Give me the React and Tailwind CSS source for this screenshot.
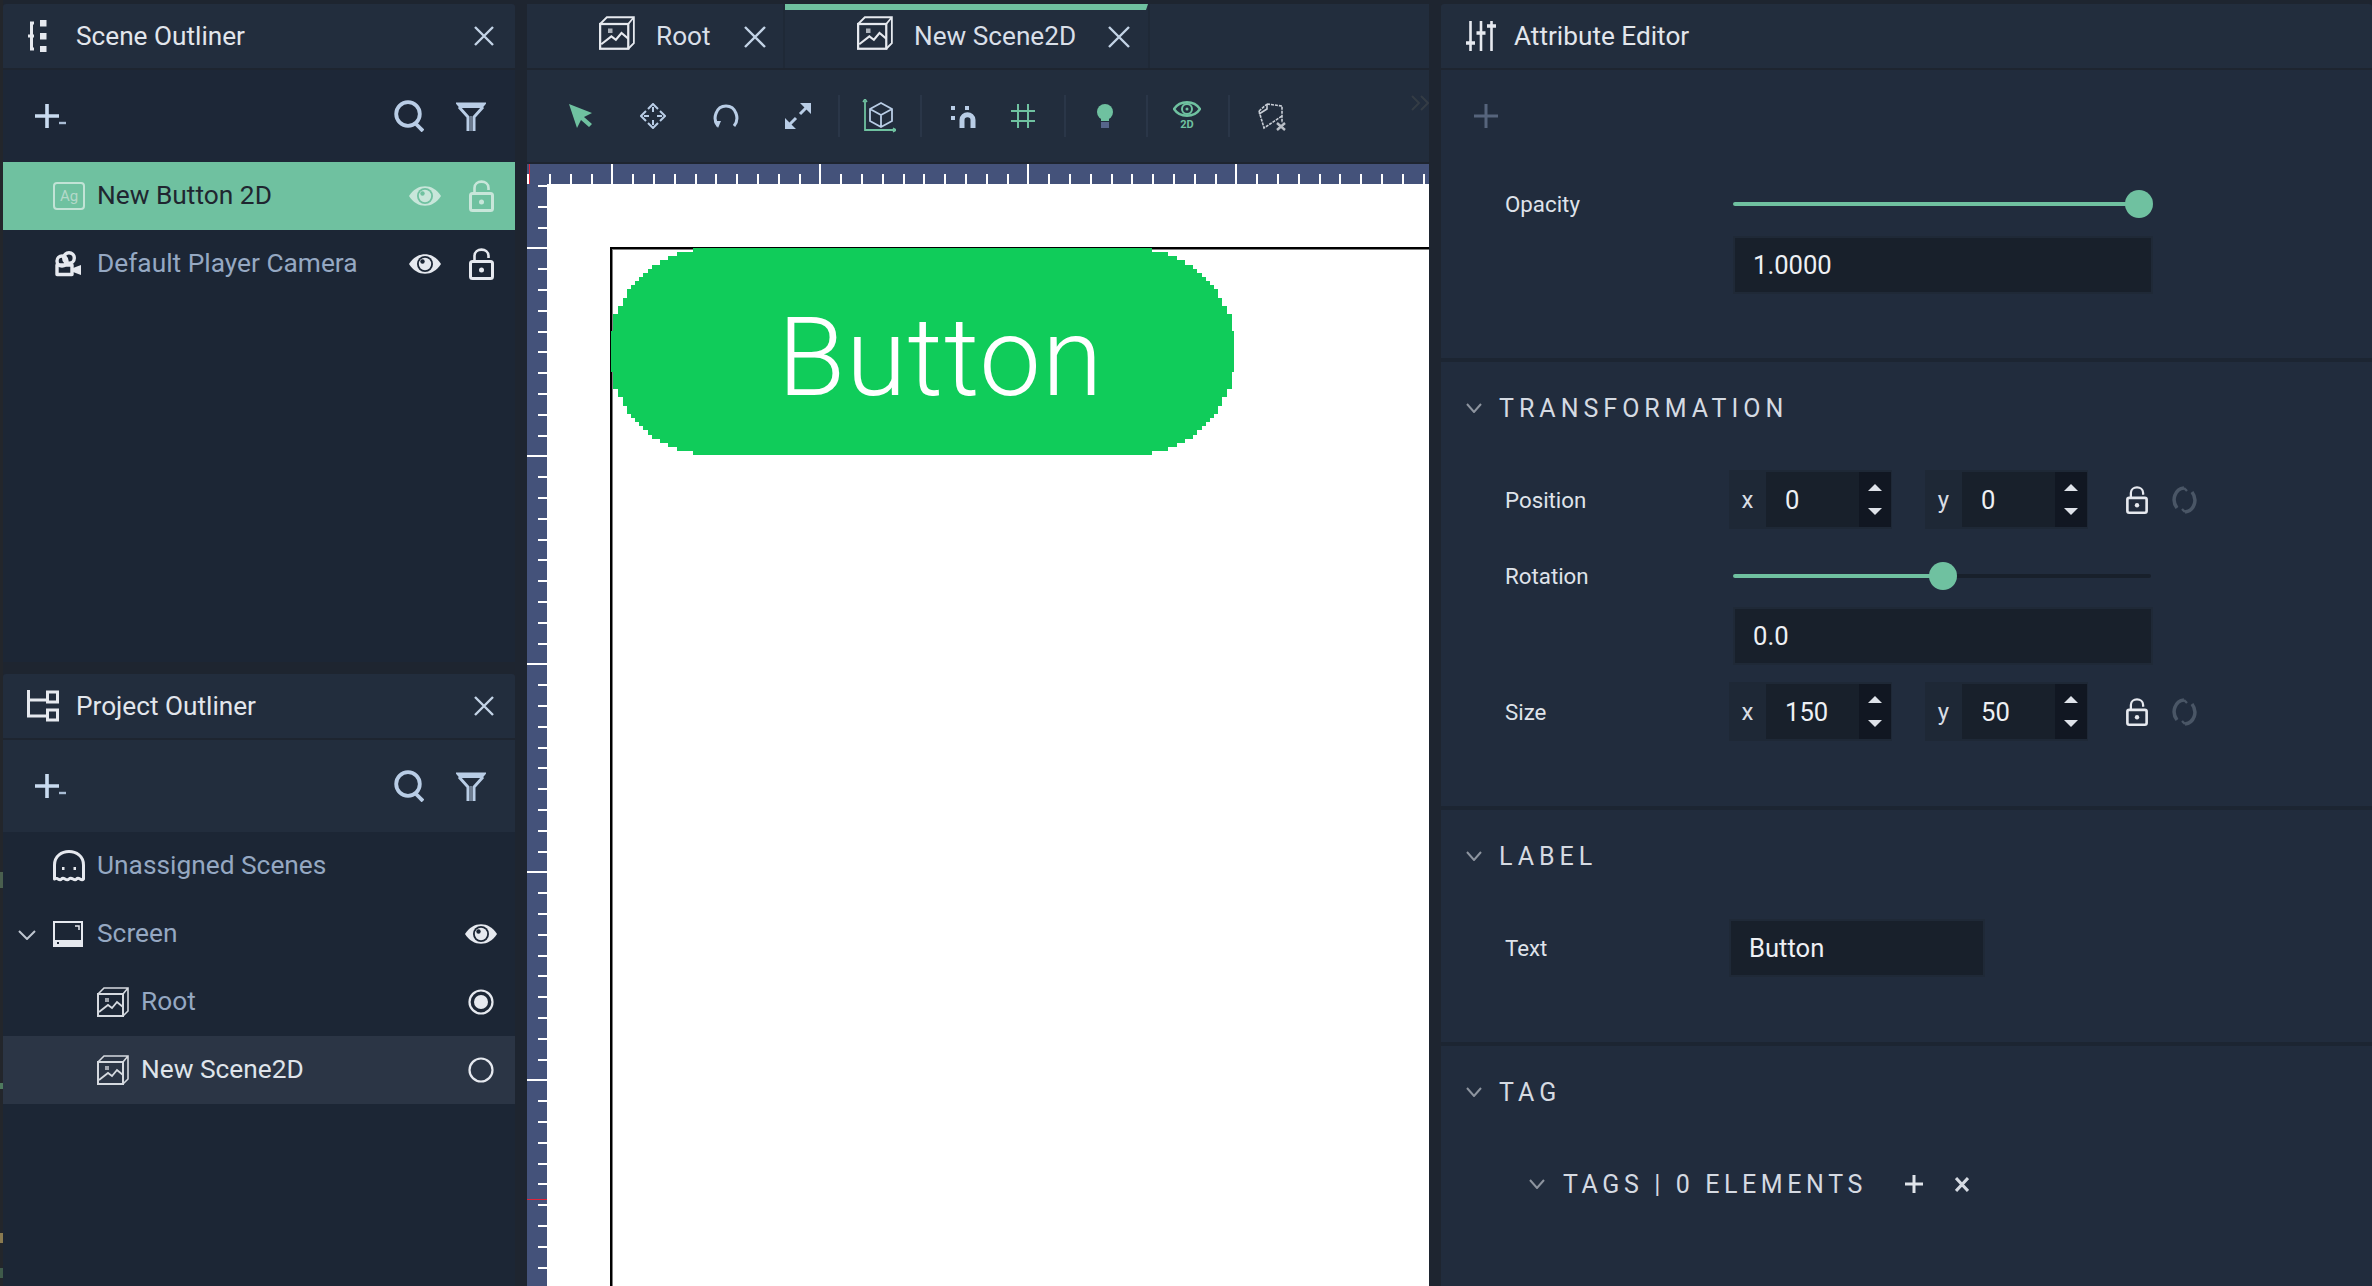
const L = '#1c2635', G = '#6fc1a0', I = '#b9cde6', W = '#e6e9ef';

const Svg = ({ w, h, children, className = '' }) => (
  <svg width={w} height={h} viewBox={`0 0 ${w} ${h}`} fill="none" className={`shrink-0 ${className}`}>{children}</svg>
);

const Close = ({ s = 20, c = '#c3d3e6' }) => (
  <Svg w={s} h={s}><path d={`M1 1L${s - 1} ${s - 1}M${s - 1} 1L1 ${s - 1}`} stroke={c} strokeWidth="2.4" /></Svg>
);
const TreeIcon = () => (
  <Svg w={20} h={32}>
    <path d="M7 3H4.500V29H7M1 16H7" stroke={W} strokeWidth="3" />
    <rect x="13" y="0" width="6.500" height="6.500" fill={W} /><rect x="13" y="13" width="6.500" height="6.500" fill={W} /><rect x="13" y="26" width="6.500" height="6.500" fill={W} />
  </Svg>
);
const ProjectIcon = () => (
  <Svg w={32} h={32}>
    <path d="M1.500 0V26H20M1.500 10H20" stroke={W} strokeWidth="3" />
    <rect x="20.500" y="2" width="10" height="10" stroke={W} strokeWidth="3" /><rect x="20.500" y="20" width="10" height="10" stroke={W} strokeWidth="3" />
  </Svg>
);
const Sliders = () => (
  <Svg w={30} h={30}>
    <path d="M4.500 0V30M15 0V30M25.500 0V30" stroke={W} strokeWidth="2.600" />
    <path d="M0 22H9M10.500 12H19.500M21 5H30" stroke={W} strokeWidth="3.500" />
  </Svg>
);
const PlusMenu = () => (
  <Svg w={32} h={24}>
    <path d="M12 0V24M0 12H24" stroke="#c9dbf0" strokeWidth="3.600" /><path d="M24 19H31" stroke="#a9bcd4" strokeWidth="2.400" />
  </Svg>
);
const Search = () => (
  <Svg w={30} h={32}>
    <circle cx="14" cy="14" r="11.800" stroke={I} strokeWidth="3.800" /><path d="M21 23L29 31" stroke={I} strokeWidth="3.800" />
  </Svg>
);
const Filter = () => (
  <Svg w={30} h={30}>
    <path d="M1 2.500H29L26 6H4Z" fill={I} stroke={I} strokeWidth="1.800" />
    <path d="M3 6L12 16V30M27 6L18 16V30" stroke={I} strokeWidth="3" /><path d="M15 15V30" stroke={I} strokeWidth="2" strokeOpacity=".5" />
  </Svg>
);
const Eye = ({ c = W, bg = L }) => (
  <Svg w={32} h={20}>
    <path d="M0 10C8 -3 24 -3 32 10C24 23 8 23 0 10Z" fill={c} />
    <circle cx="16" cy="10" r="8" fill={bg} /><circle cx="16" cy="10" r="6.200" fill={c} /><circle cx="13.500" cy="7.500" r="2.200" fill={bg} />
  </Svg>
);
const Lock = ({ c = W, w = 25, h = 32 }) => (
  <svg width={w} height={h} viewBox="0 0 25 32" fill="none" className="shrink-0">
    <rect x="1.500" y="13.500" width="22" height="17" rx="2" stroke={c} strokeWidth="3" />
    <path d="M5.500 13V8C5.500 -0.500 19.500 -0.500 19.500 8V10" stroke={c} strokeWidth="2.600" />
    <circle cx="12.500" cy="22" r="2.500" fill={c} />
  </svg>
);
const Ag = () => (
  <div className="flex h-[28px] w-[32px] shrink-0 items-center justify-center rounded-[4px] border-2 border-[#c2e3d6] text-[15px] text-[#b4d9ca]">Ag</div>
);
const Camera = () => (
  <Svg w={29} h={26}>
    <circle cx="9" cy="10" r="5" stroke={W} strokeWidth="3.400" />
    <circle cx="16" cy="7" r="5.300" stroke={W} strokeWidth="3.400" />
    <path d="M4 14V23.500H19V14H4Z" stroke={W} strokeWidth="3.400" strokeLinejoin="round" />
    <path d="M20 17L28 14V24L20 21Z" fill={W} />
    <path d="M11 11H18V14H11Z" fill={W} />
  </Svg>
);
const Ghost = () => (
  <Svg w={32} h={32}>
    <path d="M1.500 29V15C1.500 -3 30.500 -3 30.500 15V29C28 32 26 26 23.500 29C21 32 19 26 16 29C13 32 11 26 8.500 29C6 32 4 26 1.500 29Z" stroke={W} strokeWidth="3" strokeLinejoin="round" />
    <rect x="9" y="17" width="2.500" height="3" fill={W} /><rect x="20.500" y="17" width="2.500" height="3" fill={W} />
  </Svg>
);
const Screen = () => (
  <Svg w={30} h={26}>
    <rect x="1" y="1" width="28" height="24" stroke={W} strokeWidth="2" /><rect x="0" y="19" width="30" height="7" fill={W} />
    <rect x="4" y="21" width="2" height="2" fill={L} /><path d="M22 5H26V9" stroke={W} strokeWidth="1.500" />
  </Svg>
);
const SceneIcon = ({ c = W, w = 32, h = 30 }) => (
  <svg width={w} height={h} viewBox="0 0 32 30" fill="none" className="shrink-0">
    <rect x="1" y="7" width="25" height="22" stroke={c} strokeWidth="2" /><path d="M1 7L7 1H31V24L26 29M26 7L31 1" stroke={c} strokeWidth="1.600" />
    <rect x="8" y="11" width="4" height="4" fill={c} fillOpacity=".7" />
    <path d="M2 25L11 18L15 21L20 15L26 20" stroke={c} strokeWidth="1.800" />
  </svg>
);
const Chevron = ({ w = 16, h = 10, c = '#8d949f' }) => (
  <Svg w={w} h={h}><path d={`M1 1L${w / 2} ${h - 1}L${w - 1} 1`} stroke={c} strokeWidth="2" /></Svg>
);
const Radio = ({ on }) => (
  <Svg w={26} h={26}>
    <circle cx="13" cy="13" r="11.500" stroke={W} strokeWidth="2.200" />{on && <circle cx="13" cy="13" r="7" fill={W} />}
  </Svg>
);
const Arrow = () => (
  <Svg w={24} h={24}><path d="M0 0L23 9L15 13L23 20L20 23L12 16L8 24Z" fill={G} /></Svg>
);
const Move = () => (
  <Svg w={26} h={26}>
    <path d="M13 4V9M13 17V22M4 13H9M17 13H22" stroke={I} strokeWidth="2" />
    <path d="M8 6L13 1L18 6M8 20L13 25L18 20M6 8L1 13L6 18M20 8L25 13L20 18" stroke={I} strokeWidth="2" />
  </Svg>
);
const Rotate = () => (
  <Svg w={26} h={24}>
    <path d="M5 22C-1 15 3 2 13 2C23 2 27 15 21 22" stroke={I} strokeWidth="3" /><path d="M1 17H8L5 24Z" fill={I} />
  </Svg>
);
const Scale = () => (
  <Svg w={26} h={26}>
    <path d="M15 11L25 1M1 25L11 15" stroke={I} strokeWidth="3" /><path d="M15 0H26V11Z M0 15V26H11Z" fill={I} />
  </Svg>
);
const CubeAxes = () => (
  <Svg w={34} h={34}>
    <path d="M3 2V31H33" stroke={G} strokeWidth="1.800" /><path d="M1 3L3 0L5 3M31 29L34 31L31 33" stroke={G} strokeWidth="1.500" />
    <path d="M19 4L30 10V22L19 28L8 22V10ZM8 10L19 16L30 10M19 16V28" stroke={I} strokeWidth="1.800" />
  </Svg>
);
const Magnet = () => (
  <Svg w={26} h={24}>
    <rect x="0" y="2" width="4" height="4" fill={I} /><rect x="14" y="2" width="4" height="4" fill={I} /><rect x="0" y="12" width="4" height="4" fill={I} />
    <path d="M11 24V16C11 9 22 9 22 16V24" stroke={I} strokeWidth="5" />
  </Svg>
);
const Grid = () => (
  <Svg w={24} h={24}><path d="M7 0V24M17 0V24M0 7H24M0 17H24" stroke={G} strokeWidth="2" /></Svg>
);
const Bulb = () => (
  <Svg w={16} h={24}><circle cx="8" cy="8" r="8" fill={G} /><rect x="4" y="14" width="8" height="3" fill={G} /><rect x="4" y="18" width="8" height="6" fill="#56658a" /></Svg>
);
const Eye2D = () => (
  <Svg w={28} h={30}>
    <path d="M1 8C7 -1 21 -1 27 8C21 17 7 17 1 8Z" stroke={G} strokeWidth="2.400" /><circle cx="14" cy="8" r="5" stroke={G} strokeWidth="2" /><circle cx="14" cy="8" r="1.500" fill={G} />
    <text x="14" y="27" textAnchor="middle" fontSize="11" fontWeight="700" fill={G}>2D</text>
  </Svg>
);
const CubeX = () => (
  <Svg w={28} h={30}>
    <path d="M1 10L9 3M9 3L24 5V22M1 10L6 27L24 15" stroke="#c9ced6" strokeWidth="1.600" strokeDasharray="3 1" /><path d="M9 3V8L1 13" stroke="#c9ced6" strokeWidth="1.600" />
    <path d="M19 22L27 29M27 22L19 29" stroke="#b9bec6" strokeWidth="2.400" />
  </Svg>
);
const LinkIcon = () => (
  <Svg w={27} h={28}>
    <path d="M6 22C0 14 4 3 13 2M21 6C27 14 23 25 14 26" stroke="#4a5666" strokeWidth="3.500" /><path d="M13 2L16 5M14 26L11 23" stroke="#4a5666" strokeWidth="2.400" />
  </Svg>
);

const Head = ({ icon, title, close = true, pad = 'pl-[24px]', gap = 'w-[49px]' }) => (
  <div className={`flex h-[64px] shrink-0 items-center rounded-t-[3px] bg-[#222d3d] ${pad} pr-[21px]`}>
    <div className={`flex ${gap} shrink-0`}>{icon}</div>
    <span className="flex-1 pt-[1px] text-[26.200px] text-[#e2e6ec]">{title}</span>
    {close && <Close />}
  </div>
);

const Tools = ({ bg }) => (
  <div className={`mt-[2px] flex h-[92px] shrink-0 items-center pl-[32px] pr-[29px] ${bg}`}>
    <PlusMenu />
    <div className="flex-1" />
    <Search />
    <div className="w-[32px]" />
    <Filter />
  </div>
);

const Row = ({ icon, text, textClass = 'text-[#95a8c2]', bg = '', indent = 'pl-[47px]', gap = 'w-[47px]', right, chev }) => (
  <div className={`relative flex h-[68px] items-center ${indent} pr-[21px] ${bg}`}>
    {chev && <div className="absolute left-[15px] top-[30px]"><Chevron w={18} h={10} c="#bfc6d0" /></div>}
    <div className={`${gap} flex shrink-0 items-center pl-[3px]`}>{icon}</div>
    <span className={`flex-1 text-[26.300px] ${textClass}`}>{text}</span>
    {right}
  </div>
);

const Divider = () => <div className="h-[4px] shrink-0 bg-[#1c2532]" />;

const Slider = ({ pct }) => (
  <div className="relative h-[28px] w-[418px]">
    <div className="absolute left-0 right-0 top-[12px] h-[4px] rounded-full bg-[#18202b]" />
    <div className="absolute left-0 top-[12px] h-[4px] rounded-full bg-[#6fc1a0]" style={{ width: pct }} />
    <div className="absolute top-0 h-[28px] w-[28px] rounded-full bg-[#6fc1a0]" style={{ left: pct - 14 }} />
  </div>
);

const Box = ({ children, w = 'w-[420px]', ml = 'ml-[292px]', mt = 'mt-[17px]' }) => (
  <div className={`flex h-[58px] ${w} ${ml} ${mt} items-center border-2 border-[#1f2937] bg-[#18202b] pl-[18px] text-[25.600px] text-[#eef0f4]`}>{children}</div>
);

const Num = ({ axis, value }) => (
  <div className="flex h-[59px] w-[163px] items-stretch bg-[#1e2836] py-[2px] pr-px">
    <div className="flex w-[37px] items-center justify-center text-[24px] text-[#d9dde4]">{axis}</div>
    <div className="flex w-[93px] items-center bg-[#18202b] pl-[19px] pt-[1px] text-[25.600px] text-[#eef0f4]">{value}</div>
    <div className="flex w-[32px] flex-col items-center justify-between bg-[#111722] py-[12px]">
      <Svg w={14} h={7}><path d="M0 7L7 0L14 7Z" fill="#dfe3ea" /></Svg>
      <Svg w={14} h={7}><path d="M0 0L14 0L7 7Z" fill="#dfe3ea" /></Svg>
    </div>
  </div>
);

const VecRow = ({ label, x, y, mt }) => (
  <div className={`flex h-[59px] items-center pl-[64px] text-[22.300px] text-[#dfe3ea] ${mt}`}>
    <span className="w-[224px] pt-[2px]">{label}</span>
    <Num axis="x" value={x} />
    <div className="w-[33px]" />
    <Num axis="y" value={y} />
    <div className="ml-[38px]"><Lock w={22} h={28} /></div>
    <div className="ml-[23px]"><LinkIcon /></div>
  </div>
);

const SecHead = ({ text }) => (
  <div className="mt-[31px] flex h-[30px] items-center pl-[25px]">
    <Chevron />
    <span className="ml-[17px] pt-[1px] text-[25px] tracking-[5px] text-[#d5dae2]">{text}</span>
  </div>
);

const CORNER = [19.7, 15.8, 13.7, 11.8, 9.9, 8.8, 7.6, 6.7, 5.7, 4.8, 3.8, 3.8, 2.8, 2.8, 1.8, 1.8, 0.6, 0.6, 0.6, 0.6];

const PixelPill = () => {
  const rows = Array.from({ length: 50 }, (_, r) => {
    const idx = r < 20 ? r : r >= 30 ? 49 - r : -1;
    return { r, inset: idx < 0 ? 0 : CORNER[idx] };
  });
  return (
    <svg viewBox="0 0 150 50" preserveAspectRatio="none" shapeRendering="crispEdges" className="absolute inset-0 h-full w-full">
      {rows.map(({ r, inset }) => <rect key={r} x={inset} y={r} width={150 - inset * 2} height="1.05" fill="#10cc5a" />)}
    </svg>
  );
};

const topTicks = Array.from({ length: 43 }, (_, i) => 22 + i * 20.8);
const leftTicks = Array.from({ length: 54 }, (_, i) => 1 + i * 20.8);
const Sep = ({ ml }) => <div className={`${ml} h-[42px] w-[2px] shrink-0 bg-[#2a3648]`} />;

export default function App() {
  return (
    <div className="relative flex h-[1286px] w-[2372px] overflow-hidden bg-[#1e2530] pl-[3px] pt-[4px] font-['Roboto',sans-serif]">
      <svg width="3" height="1286" className="absolute left-0 top-0 bg-[#23262b]">
        <rect y="872" width="3" height="16" fill="#4a5f4e" /><rect y="1083" width="3" height="6" fill="#4f7a5e" />
        <rect y="1233" width="3" height="10" fill="#8a7a50" /><rect y="1268" width="3" height="10" fill="#3f5a4a" />
      </svg>
      {/* Left column */}
      <div className="flex w-[512px] shrink-0 flex-col">
        <div className="flex h-[658px] shrink-0 flex-col">
          <Head icon={<TreeIcon />} title="Scene Outliner" />
          <Tools bg="bg-[#1d2737]" />
          <div className="flex-1 bg-[#1c2635]">
            <Row icon={<Ag />} text="New Button 2D" textClass="text-[#1f2630]" bg="bg-[#6fc1a0]" right={
              <div className="flex items-center gap-[28px]"><Eye c="#c8e6da" bg="#6fc1a0" /><Lock c="#c8e6da" /></div>} />
            <Row icon={<Camera />} text="Default Player Camera" right={
              <div className="flex items-center gap-[28px]"><Eye /><Lock /></div>} />
          </div>
        </div>
        <div className="mt-[12px] flex min-h-0 flex-1 flex-col">
          <Head icon={<ProjectIcon />} title="Project Outliner" />
          <Tools bg="bg-[#222d3d]" />
          <div className="flex-1 bg-[#1c2635]">
            <Row icon={<Ghost />} text="Unassigned Scenes" />
            <Row chev icon={<Screen />} text="Screen" right={<div className="-mr-[3px]"><Eye /></div>} />
            <Row icon={<SceneIcon c="#d5d9df" />} text="Root" indent="pl-[91px]" right={<Radio on />} />
            <Row icon={<SceneIcon c="#d5d9df" />} text="New Scene2D" textClass="text-[#dfe4ea]" indent="pl-[91px]" bg="bg-[#2b3545]" right={<Radio />} />
          </div>
        </div>
      </div>

      {/* Center column */}
      <div className="ml-[12px] flex w-[902px] shrink-0 flex-col">
        <div className="flex h-[64px] shrink-0 bg-[#222d3d]">
          <div className="flex w-[258px] items-center border-r-2 border-[#1f2937] pl-[72px]">
            <div className="-mt-[6px]"><SceneIcon w={36} h={34} /></div>
            <span className="ml-[21px] pt-[1px] text-[26.200px] text-[#d9dfe8]">Root</span>
            <div className="ml-[33px] pt-[2px]"><Close s={22} /></div>
          </div>
          <div className="relative flex w-[365px] items-center border-r-2 border-[#1f2937] pl-[72px]">
            <div className="absolute left-0 right-0 top-0 h-[6px] bg-[#6fc1a0] [clip-path:polygon(0_0,100%_0,calc(100%-2px)_100%,0_100%)]" />
            <div className="-mt-[6px]"><SceneIcon w={36} h={34} /></div>
            <span className="ml-[21px] pt-[1px] text-[26.200px] text-[#d9dfe8]">New Scene2D</span>
            <div className="ml-[32px] pt-[2px]"><Close s={22} /></div>
          </div>
        </div>
        <div className="relative mt-[2px] flex h-[92px] shrink-0 items-center bg-[#222d3d] pl-[42px]">
          <Arrow />
          <div className="ml-[47px]"><Move /></div>
          <div className="ml-[47px]"><Rotate /></div>
          <div className="ml-[46px]"><Scale /></div>
          <Sep ml="ml-[27px]" />
          <div className="ml-[22px]"><CubeAxes /></div>
          <Sep ml="ml-[24px]" />
          <div className="ml-[29px]"><Magnet /></div>
          <div className="ml-[34px]"><Grid /></div>
          <Sep ml="ml-[29px]" />
          <div className="ml-[31px]"><Bulb /></div>
          <Sep ml="ml-[33px]" />
          <div className="ml-[25px]"><Eye2D /></div>
          <Sep ml="ml-[27px]" />
          <div className="ml-[28px]"><CubeX /></div>
          <div className="absolute right-0 top-[24px]">
            <Svg w={18} h={18}><path d="M1 2L8 9L1 16M10 2L17 9L10 16" stroke="#343c45" strokeWidth="2" /></Svg>
          </div>
        </div>
        <svg width="902" height="20" className="mt-[2px] shrink-0 bg-[#44527a]">
          <rect x="0" y="10" width="2" height="10" fill="#fff" /><rect x="2" y="0" width="1" height="20" fill="#e0233a" />
          {topTicks.map((x, i) => {
            const major = i % 10 === 3;
            return <rect key={i} x={Math.round(x)} y={major ? 0 : 10} width="2" height={major ? 20 : 10} fill="#fff" />;
          })}
        </svg>
        <div className="flex min-h-0 flex-1">
          <svg width="20" height="1102" className="shrink-0 bg-[#44527a]">
            {leftTicks.map((y, i) => {
              const major = i % 10 === 3;
              return <rect key={i} x={major ? 0 : 11} y={Math.round(y)} width={major ? 20 : 9} height="2" fill="#fff" />;
            })}
            <rect x="0" y="1015" width="20" height="1" fill="#e0233a" />
          </svg>
          <div className="min-w-0 flex-1 overflow-hidden bg-white pl-[63px] pt-[63px]">
            <div className="h-[1100px] w-[900px] border-l-2 border-t-2 border-black shadow-[inset_1px_1px_0_#808080]">
              <div className="relative -ml-px -mt-px flex h-[207px] w-[623px] items-center justify-center pl-[36px] pt-[12px] text-[110px] font-light leading-none tracking-[1px] text-white">
                <PixelPill />
                <span className="relative">Button</span>
              </div>
            </div>
          </div>
        </div>
      </div>

      {/* Right column */}
      <div className="ml-[12px] flex min-w-0 flex-1 flex-col">
        <Head icon={<Sliders />} title="Attribute Editor" pad="pl-[25px]" gap="w-[48px]" close={false} />
        <div className="mt-[2px] flex flex-1 flex-col bg-[#212c3d]">
          <div className="h-[288px] shrink-0">
            <div className="flex h-[92px] items-center pl-[33px]">
              <Svg w={24} h={24}><path d="M12 0V24M0 12H24" stroke="#56647c" strokeWidth="3" /></Svg>
            </div>
            <div className="mt-[28px] flex h-[28px] items-center pl-[64px] text-[22.300px] text-[#dfe3ea]">
              <span className="w-[228px] pt-[2px]">Opacity</span>
              <Slider pct={406} />
            </div>
            <Box mt="mt-[18px]">1.0000</Box>
          </div>
          <Divider />
          <div className="h-[444px] shrink-0">
            <SecHead text="TRANSFORMATION" />
            <VecRow label="Position" x="0" y="0" mt="mt-[47px]" />
            <div className="mt-[33px] flex h-[28px] items-center pl-[64px] text-[22.300px] text-[#dfe3ea]">
              <span className="w-[228px] pt-[2px]">Rotation</span>
              <Slider pct={210} />
            </div>
            <Box>0.0</Box>
            <VecRow label="Size" x="150" y="50" mt="mt-[17px]" />
          </div>
          <Divider />
          <div className="h-[232px] shrink-0">
            <SecHead text="LABEL" />
            <div className="mt-[48px] flex items-center pl-[64px] text-[22.300px] text-[#dfe3ea]">
              <span className="w-[224px] pt-[2px]">Text</span>
              <Box w="w-[256px]" ml="ml-0" mt="mt-0">Button</Box>
            </div>
          </div>
          <Divider />
          <SecHead text="TAG" />
          <div className="mt-[62px] flex h-[30px] items-center pl-[88px]">
            <Chevron />
            <span className="ml-[18px] pt-[1px] text-[25px] tracking-[4.600px] text-[#d5dae2]">TAGS | 0 ELEMENTS</span>
            <div className="ml-[38px]"><Svg w={18} h={18}><path d="M9 0V18M0 9H18" stroke="#e0e4ea" strokeWidth="3" /></Svg></div>
            <div className="ml-[32px]"><Svg w={14} h={15}><path d="M1 1L13 14M13 1L1 14" stroke="#d5dae2" strokeWidth="3" /></Svg></div>
          </div>
        </div>
      </div>
    </div>
  );
}
